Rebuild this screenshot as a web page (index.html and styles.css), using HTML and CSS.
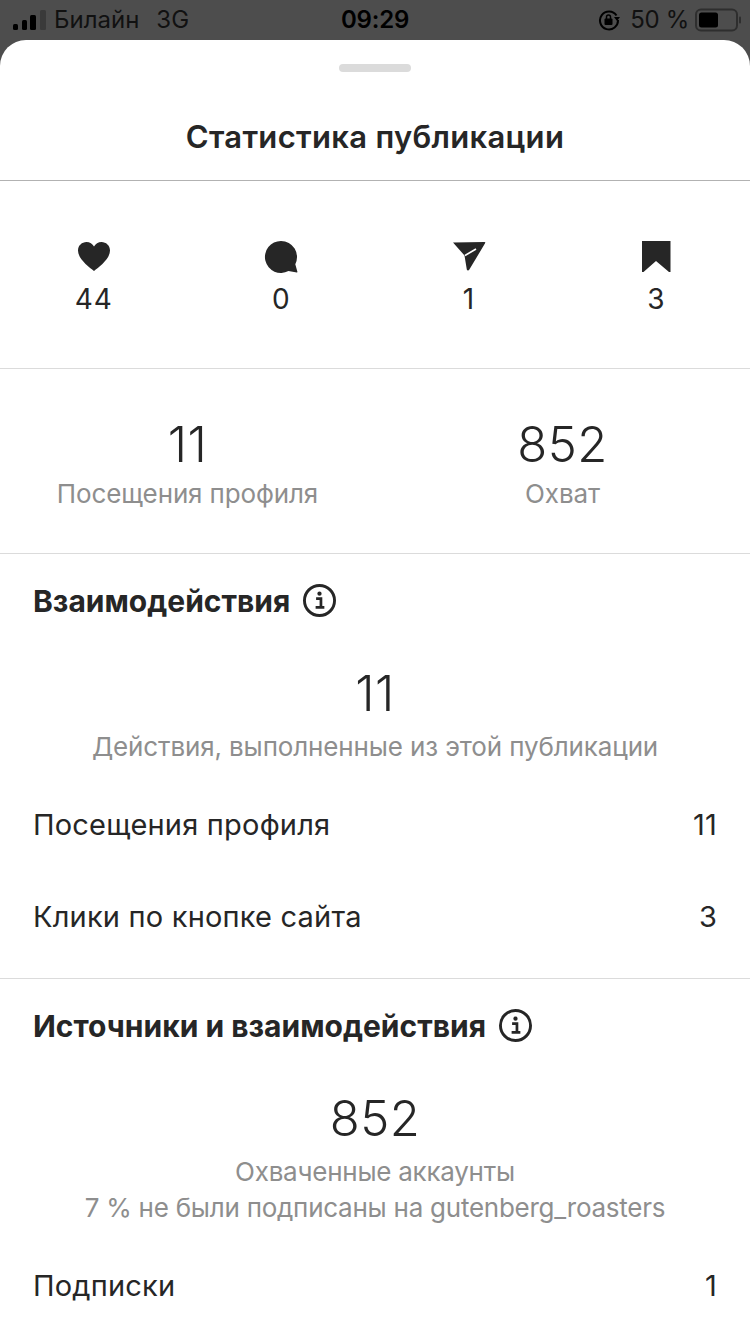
FILE: index.html
```html
<!DOCTYPE html>
<html lang="ru">
<head>
<meta charset="utf-8">
<title>Статистика публикации</title>
<link rel="stylesheet" href="styles.css">
</head>
<body>
<div class="status">
  <div class="st-left">
    <svg class="signal" width="34" height="20" viewBox="0 0 34 20"><rect x="0" y="14" width="5" height="6" rx="1.5" fill="#000"/><rect x="9" y="10" width="5" height="10" rx="1.5" fill="#000"/><rect x="17" y="5" width="6" height="15" rx="1.5" fill="#000"/><rect x="27" y="0" width="6" height="20" rx="1.5" fill="#3a3a3a"/></svg>
    <span class="carrier">Билайн</span><span class="net">3G</span>
  </div>
  <div class="st-time">09:29</div>
  <div class="st-right">
    <svg width="22" height="22" viewBox="0 0 22 22"><path d="M18.500 6.500A9 9 0 1 0 20 11" fill="none" stroke="#000" stroke-width="2"/><path d="M16 8h6l-3 4z" fill="#000"/><rect x="6.500" y="9.500" width="8" height="6.500" rx="1" fill="#000"/><path d="M8.500 10V8a2 2 0 0 1 4 0v2" fill="none" stroke="#000" stroke-width="1.500"/></svg>
    <span class="pct">50 %</span>
    <svg width="48" height="24" viewBox="0 0 48 24"><rect x="1" y="1.500" width="41" height="21" rx="5" fill="none" stroke="#2e2e2e" stroke-width="2"/><rect x="4" y="4.500" width="19" height="15" rx="2.500" fill="#000"/><rect x="44" y="8.500" width="2" height="7" rx="1" fill="#2e2e2e"/></svg>
  </div>
</div>
<main class="sheet">
  <div class="handle-wrap"><div class="handle"></div></div>
  <h1 class="title">Статистика публикации</h1>
  <section class="icons">
    <div class="ic">
      <svg width="34" height="34" viewBox="0 0 34 34"><path d="M17 31 C12 27 1 19 1 10.500 C1 5.500 5 2 9.500 2 C12.800 2 15.500 3.800 17 6.500 C18.500 3.800 21.200 2 24.500 2 C29 2 33 5.500 33 10.500 C33 19 22 27 17 31Z" fill="#262626"/></svg>
      <span>44</span>
    </div>
    <div class="ic">
      <svg width="34" height="34" viewBox="0 0 34 34"><path d="M17 1a16 16 0 1 0 7.500 30.100 L32.800 32.500 C33.300 32.600 33.600 32.200 33.400 31.700 L31.300 24.200 A16 16 0 0 0 17 1Z" fill="#262626"/></svg>
      <span>0</span>
    </div>
    <div class="ic">
      <svg width="34" height="34" viewBox="0 0 34 34"><path d="M1 2.500 L32.500 2 C33.300 2 33.500 2.600 33.200 3.100 L17.200 29.800 C16.600 30.800 15 30.600 14.800 29.500 L12.500 15.500 Z" fill="#262626"/><path d="M13 15.500 L24 9" stroke="#fff" stroke-width="1.600" fill="none"/></svg>
      <span>1</span>
    </div>
    <div class="ic">
      <svg width="34" height="34" viewBox="0 0 34 34"><path d="M3 1 H31.500 V32 H30 L17 21 L4.500 32 H3 Z" fill="#262626"/></svg>
      <span>3</span>
    </div>
  </section>
  <section class="kpis">
    <div class="kpi"><div class="num">11</div><div class="cap">Посещения профиля</div></div>
    <div class="kpi"><div class="num">852</div><div class="cap">Охват</div></div>
  </section>
  <section class="block b1">
    <h2 class="head">Взаимодействия
      <svg class="info" width="33" height="33" viewBox="0 0 34 34"><circle cx="17" cy="17" r="15.500" fill="none" stroke="#262626" stroke-width="3"/><circle cx="17" cy="10" r="2.200" fill="#262626"/><path d="M13.500 15 H18.500 V23.500 M13 24 H22" fill="none" stroke="#262626" stroke-width="2.800"/></svg>
    </h2>
    <div class="center"><div class="num">11</div><div class="cap">Действия, выполненные из этой публикации</div></div>
    <div class="row r1"><span>Посещения профиля</span><span>11</span></div>
    <div class="row r2"><span>Клики по кнопке сайта</span><span>3</span></div>
  </section>
  <section class="block b2">
    <h2 class="head">Источники и взаимодействия
      <svg class="info" width="33" height="33" viewBox="0 0 34 34"><circle cx="17" cy="17" r="15.500" fill="none" stroke="#262626" stroke-width="3"/><circle cx="17" cy="10" r="2.200" fill="#262626"/><path d="M13.500 15 H18.500 V23.500 M13 24 H22" fill="none" stroke="#262626" stroke-width="2.800"/></svg>
    </h2>
    <div class="center"><div class="num">852</div><div class="cap tight">Охваченные аккаунты</div><div class="cap tight">7 % не были подписаны на gutenberg_roasters</div></div>
    <div class="row r1b"><span>Подписки</span><span>1</span></div>
  </section>
</main>
</body>
</html>
```
FILE: styles.css
```css
* { box-sizing: border-box; }
html, body { margin: 0; padding: 0; }
body { width: 750px; height: 1334px; overflow: hidden; background: #4d4d4d; font-family: Inter, "Noto Sans", sans-serif; color: #262626; }
.status { height: 40px; display: grid; grid-template-columns: 1fr auto 1fr; align-items: center; padding: 0 7px 0 13px; color: #000; font-size: 24px; line-height: 40px; }
.st-left { display: flex; align-items: center; }
.signal { margin-right: 7px; margin-top: -1px; }
.carrier { color: #111; }
.net { margin-left: 17px; color: #111; }
.st-time { font-weight: 600; margin-left: -6px; letter-spacing: -0.2px; }
.st-right { display: flex; align-items: center; justify-content: flex-end; gap: 10px; }
.pct { margin-right: -4px; color: #111; letter-spacing: -0.3px; }
.sheet { height: 1294px; background: #fff; border-radius: 26px 26px 0 0; overflow: hidden; }
.handle-wrap { padding-top: 24px; display: flex; justify-content: center; }
.handle { width: 72px; height: 8px; border-radius: 4px; background: #dbdbdb; }
.title { margin: 0; height: 109px; padding-top: 47px; text-align: center; font-size: 31px; line-height: 36px; font-weight: 600; letter-spacing: 0.3px; border-bottom: 1px solid #b2b2b2; }
.icons { height: 188px; display: grid; grid-template-columns: repeat(4, 187.5px); border-bottom: 1px solid #dbdbdb; padding-top: 59px; }
.ic { display: flex; flex-direction: column; align-items: center; }
.ic svg { display: block; }
.ic span { font-size: 28px; line-height: 34px; margin-top: 8px; letter-spacing: 0.8px; }
.kpis { height: 185px; display: grid; grid-template-columns: 1fr 1fr; border-bottom: 1px solid #dbdbdb; padding-top: 46px; text-align: center; }
.num { font-size: 49px; line-height: 60px; font-weight: 300; letter-spacing: 0.5px; }
.cap { font-size: 26px; line-height: 36px; color: #8e8e8e; letter-spacing: -0.13px; }
.cap.tight { letter-spacing: -0.25px; }
.kpi .cap { margin-top: 1px; }
.block { padding: 0 33px; }
.b1 { height: 425px; border-bottom: 1px solid #dbdbdb; }
.head { margin: 0; display: flex; align-items: center; gap: 13px; padding-top: 30px; height: 64px; font-size: 30px; line-height: 36px; font-weight: 700; }
.info { flex: none; margin-top: -1px; }
.center { text-align: center; margin-top: 46px; }
.center .num + .cap { margin-top: 5px; }
.row { display: flex; justify-content: space-between; font-size: 29px; line-height: 36px; letter-spacing: 0.2px; }
.r1 { margin-top: 42px; }
.r2 { margin-top: 56px; }
.r1b { margin-top: 42px; }
```
